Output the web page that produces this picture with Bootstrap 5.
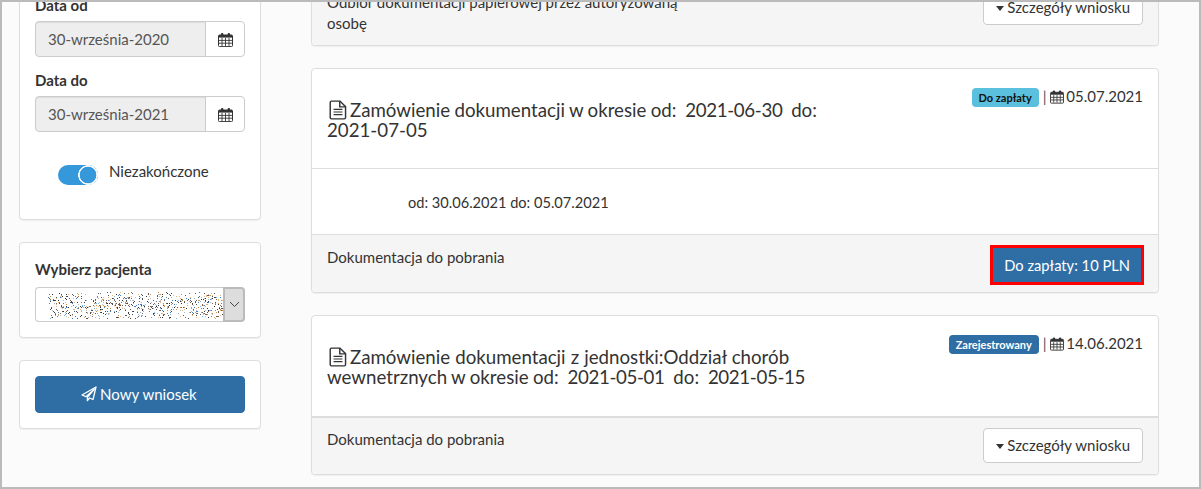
<!DOCTYPE html>
<html lang="pl">
<head>
<meta charset="utf-8">
<title>Wnioski</title>
<link href="https://cdn.jsdelivr.net/npm/bootstrap@5.3.0/dist/css/bootstrap.min.css" rel="stylesheet">
<style>
html,body{height:489px;overflow:hidden;background:#fbfbfb}
body{font-family:Lato,"Liberation Sans",sans-serif;font-size:15px;line-height:21px;color:#333}
.frame{height:489px;border:2px solid #bbb;overflow:hidden;background:#fbfbfb}
.cols{padding-left:17px;gap:50px;align-items:flex-start}
.side{width:242px;flex:none;margin-top:-23px}
.main{width:848px;flex:none;margin-top:-22px}
.box{border:1px solid #ddd;border-radius:4px;box-shadow:0 1px 1px rgba(0,0,0,.05);--bs-card-bg:#fff;background:#fff}
.side .box{padding:15px;margin-bottom:22px}
.fld-label{font-weight:700;font-size:15px;line-height:21px;margin-bottom:5px;color:#333}
.date-group{height:36px;margin-bottom:13px}
.date-group .form-control{font-size:15px;color:#555;background:#eee;border-color:#ccc;padding:6px 12px;height:36px;box-shadow:inset 0 1px 1px rgba(0,0,0,.075);border-radius:4px 0 0 4px}
.date-group .input-group-text{background:#fff;border-color:#ccc;width:40px;justify-content:center;padding:0;border-radius:0 4px 4px 0}
.switch-row{margin:25px 0 0 23px;padding-bottom:11px;height:47px;gap:11px}
.switch-row .tgl{width:40px;height:20px;margin:0;padding:0;float:none;border:0;border-radius:10px;background-color:#3498db;background-image:radial-gradient(circle at 30px 10px,#3498db 0 8px,#f4f8fb 8.6px 9.6px,transparent 10px);opacity:1}
.switch-row .form-check{padding:0;margin:0;min-height:0;display:flex}
.switch-row label{position:relative;top:-4px}
.side .pick-box{padding:16px 15px 15px}
.pick-box .fld-label{margin-bottom:7px}
.pick{height:35px}
.pick .noise-cell{flex:1;min-width:0;border:1px solid #ccc;border-right:0;border-radius:4px 0 0 4px;background:#fff;padding:0;height:35px;overflow:hidden}
.pick canvas{display:block;width:175px;height:27px;margin:4px 0 0 12px}
.pick .arrow-cell{width:22px;height:35px;padding:0;justify-content:center;background:#ddd;border:2px solid #bbb;border-radius:0 4px 4px 0}
.new-btn{background:#2f6ea5;border:1px solid #2e6da4;color:#fff;font-size:15px;height:37px;padding:0 2px 0 0;border-radius:4px;line-height:21px;--bs-btn-hover-bg:#2f6ea5}
.new-btn .ico{margin-right:-1px}
.side .btn-box{padding:15px;margin-bottom:0}
.main .box{margin-bottom:22px;overflow:hidden}
.head-pad{height:100px;padding:31px 15px 0 15px;border-bottom:1px solid #ddd;background:#fff}
.head-tall{height:102px;border-bottom:2px solid #ddd}
.ttl{font-size:18.7px;line-height:20px;width:500px;margin:0;color:#333;font-weight:400;word-spacing:-.4px}
.ttl .ico{margin:0 3px 0 2px;vertical-align:-3px}
.ttl .wide-words{word-spacing:.3px}
.num{letter-spacing:-.35px}
.meta{margin-top:-15px;white-space:nowrap;font-size:15px;gap:4px;color:#333}
.meta .sep{color:#555}
.meta .ico{margin-right:-2px}
.tag{font-size:11px;line-height:13px;padding:3px 7px;border-radius:4px;font-weight:700;margin-top:3px}
.tag-pay{background:#5bc0de;color:#111}
.tag-reg{background:#2f6ea5;color:#fff}
.body-pad{height:65px;padding:23px 16px 0 96px;background:#fff;font-size:14.6px}
.foot-pad{background:#f5f5f5;border-top:1px solid #ddd;padding:9px 15px;border-radius:0}
.foot-first{padding-bottom:11px}
.foot-pay{padding:10px 15px 7px}
.foot-last{padding-bottom:11px}
.foot-txt{width:380px;padding-top:2px}
.detail-btn{background:#fff;border:1px solid #ccc;color:#333;font-size:15px;line-height:21px;padding:6px 12px;height:35px;border-radius:4px;white-space:nowrap;--bs-btn-hover-bg:#fff}
.foot-last .detail-btn{margin-top:1px}
.caret{display:inline-block;border-top:5px solid #333;border-left:4.5px solid transparent;border-right:4.5px solid transparent;vertical-align:middle;margin-right:3px;position:relative;top:-1px}
.pay-btn{background:#2f6ea5;color:#fff;border:3px solid #f00;border-radius:0;font-size:14.7px;line-height:21px;height:40px;padding:0 11px;margin-right:-1px;white-space:nowrap;--bs-btn-hover-bg:#2f6ea5}
.ico{display:inline-block;vertical-align:-2px}
</style>
</head>
<body>
<svg width="0" height="0" class="position-absolute">
<symbol id="cal" viewBox="0 0 15 15">
<path d="M1.5 3h12a1 1 0 0 1 1 1v9.6a1 1 0 0 1-1 1h-12a1 1 0 0 1-1-1V4a1 1 0 0 1 1-1z" fill="#fff" stroke="#333" stroke-width="1"/>
<rect x="1" y="3" width="13" height="2.6" fill="#333"/>
<path d="M4 6v8M7.5 6v8M11 6v8M1 8.4h13M1 11.2h13" stroke="#333" stroke-width=".9" fill="none"/>
<rect x="3" y="1" width="2.4" height="3.6" rx="1" fill="#333"/>
<rect x="9.6" y="1" width="2.4" height="3.6" rx="1" fill="#333"/>
</symbol>
<symbol id="doc" viewBox="0 0 16 18">
<path d="M2.2 1h7.6L14.8 6v9.8a1.2 1.2 0 0 1-1.2 1.2H2.2A1.2 1.2 0 0 1 1 15.800V2.200A1.200 1.200 0 0 1 2.200 1z" fill="#fff" stroke="#333" stroke-width="1.300"/>
<path d="M9.600 1v5.200h5" fill="none" stroke="#333" stroke-width="1.300"/>
<path d="M4 8.400h8M4 10.800h8M4 13.200h8" stroke="#333" stroke-width="1.100"/>
</symbol>
<symbol id="plane" viewBox="0 0 16 16">
<path d="M15 1 1 9l4 1.700L13 3.500 6.400 11.300v3.400l2.200-2.700 3.400 1.500z" fill="none" stroke="#fff" stroke-width="1.300" stroke-linejoin="round"/>
</symbol>
</svg>
<div class="frame">
<div class="d-flex cols">
<aside class="side">
<div class="box">
<div class="fld-label">Data od</div>
<div class="input-group date-group">
<input class="form-control" type="text" value="30-września-2020" disabled>
<span class="input-group-text"><svg class="ico" width="15" height="15"><use href="#cal"/></svg></span>
</div>
<div class="fld-label">Data do</div>
<div class="input-group date-group mb-0">
<input class="form-control" type="text" value="30-września-2021" disabled>
<span class="input-group-text"><svg class="ico" width="15" height="15"><use href="#cal"/></svg></span>
</div>
<div class="d-flex align-items-center switch-row">
<div class="form-check form-switch"><input class="form-check-input tgl" type="checkbox" id="unf" checked></div>
<label for="unf">Niezakończone</label>
</div>
</div>
<div class="box pick-box">
<div class="fld-label">Wybierz pacjenta</div>
<div class="input-group pick">
<div class="noise-cell"><canvas id="noise" width="175" height="27"></canvas></div>
<span class="input-group-text arrow-cell"><svg width="11" height="7" viewBox="0 0 11 7"><path d="M1 1l4.500 4.500L10 1" fill="none" stroke="#444" stroke-width="1"/></svg></span>
</div>
</div>
<div class="box btn-box">
<button class="btn new-btn w-100" type="button"><svg class="ico" width="16" height="16"><use href="#plane"/></svg> Nowy wniosek</button>
</div>
</aside>
<main class="main">
<div class="card box">
<div class="card-footer foot-pad foot-first d-flex justify-content-between align-items-start border-top-0">
<div class="foot-txt">Odbiór dokumentacji papierowej przez autoryzowaną osobę</div>
<button class="btn detail-btn" type="button"><span class="caret"></span>Szczegóły wniosku</button>
</div>
</div>
<div class="card box">
<div class="card-header head-pad d-flex justify-content-between align-items-start">
<h3 class="ttl"><span class="d-block"><svg class="ico" width="18" height="20"><use href="#doc" width="18" height="20"/></svg>Zamówienie dokumentacji w okresie od:&nbsp; <span class="num">2021-06-30</span>&nbsp; do:</span><span class="d-block">2021-07-05</span></h3>
<div class="meta d-flex align-items-center"><span class="badge tag tag-pay">Do zapłaty</span><span class="sep">|</span><span><svg class="ico" width="14" height="15"><use href="#cal"/></svg> 05.07.2021</span></div>
</div>
<div class="card-body body-pad">od: 30.06.2021 do: 05.07.2021</div>
<div class="card-footer foot-pad foot-pay d-flex justify-content-between align-items-start">
<div class="foot-txt">Dokumentacja do pobrania</div>
<button class="btn pay-btn" type="button">Do zapłaty: 10 PLN</button>
</div>
</div>
<div class="card box">
<div class="card-header head-pad head-tall d-flex justify-content-between align-items-start">
<h3 class="ttl"><span class="d-block wide-words"><svg class="ico" width="18" height="20"><use href="#doc" width="18" height="20"/></svg>Zamówienie dokumentacji z jednostki:Oddział chorób</span><span class="d-block">wewnetrznych w okresie od:&nbsp; <span class="num">2021-05-01</span>&nbsp; do:&nbsp; <span class="num">2021-05-15</span></span></h3>
<div class="meta d-flex align-items-center"><span class="badge tag tag-reg">Zarejestrowany</span><span class="sep">|</span><span><svg class="ico" width="14" height="15"><use href="#cal"/></svg> 14.06.2021</span></div>
</div>
<div class="card-footer foot-pad foot-last d-flex justify-content-between align-items-start border-top-0">
<div class="foot-txt">Dokumentacja do pobrania</div>
<button class="btn detail-btn" type="button"><span class="caret"></span>Szczegóły wniosku</button>
</div>
</div>
</main>
</div>
</div>
<script src="https://cdn.jsdelivr.net/npm/bootstrap@5.3.0/dist/js/bootstrap.bundle.min.js"></script>
<script>
(function(){
var c=document.getElementById('noise').getContext('2d');
var s=12345;function r(){s=(s*1103515245+12345)&2147483647;return s/2147483647;}
var cols=['#444','#333','#555','#c98a4a','#7fb6e6','#e8b27a','#3f7fc4','#8a6a55','#bbb','#6d5a50'];
for(var y=0;y<27;y++){for(var x=0;x<175;x++){
  var d=.2*(1-Math.abs(y-13)/22);
  if(r()<d){c.fillStyle=cols[Math.floor(r()*cols.length)];c.fillRect(x,y,1,1);}
}}
})();
</script>
</body>
</html>
